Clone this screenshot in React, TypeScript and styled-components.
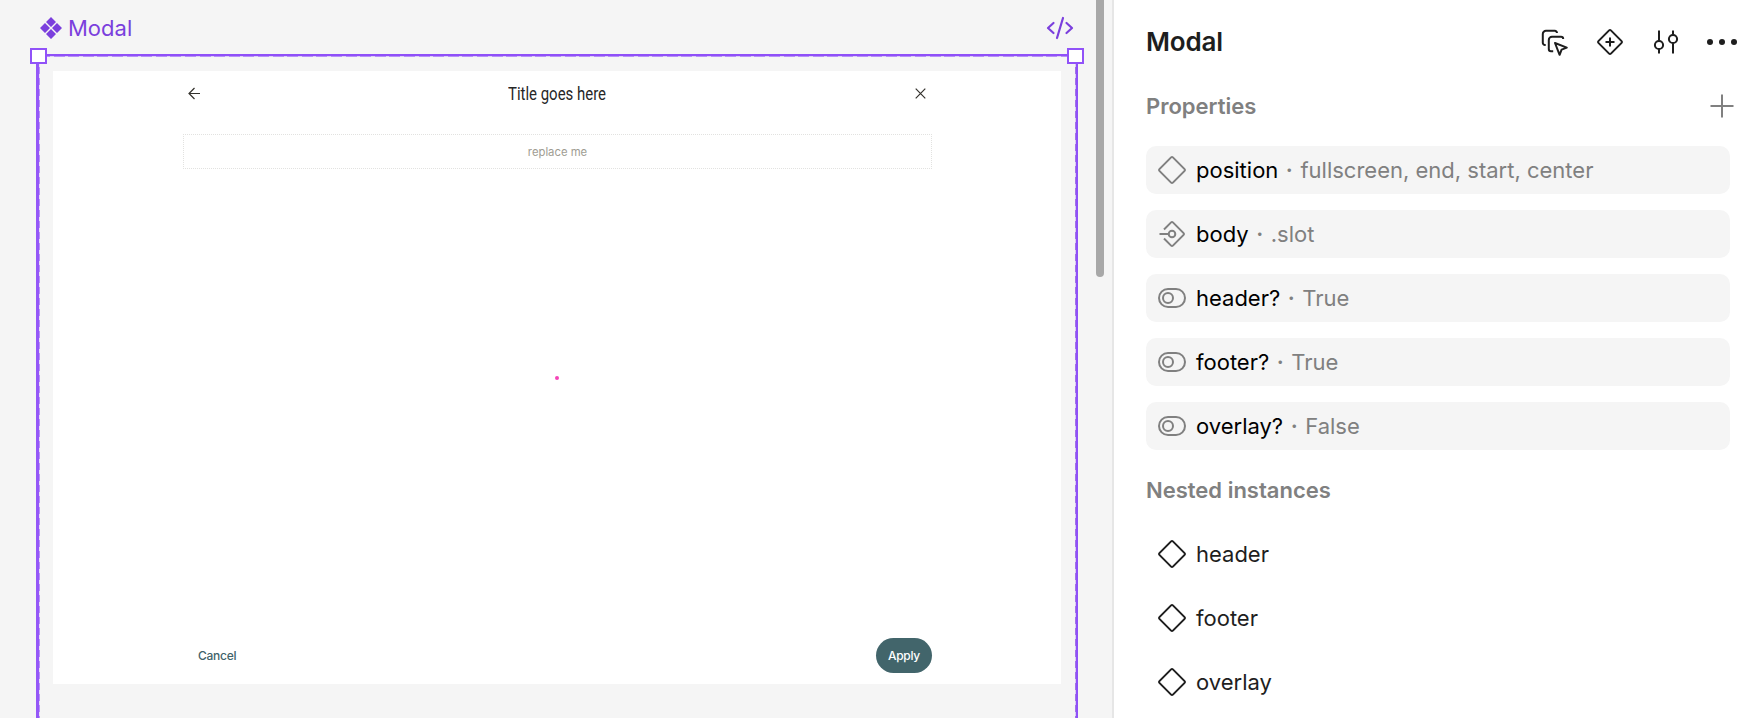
import React from 'react';
import styled, { createGlobalStyle } from 'styled-components';

const GlobalStyle = createGlobalStyle`
  *, *::before, *::after { box-sizing: border-box; }
  body { margin: 0; overflow: hidden; }
`;

const Screen = styled.div`
  display: flex;
  width: 1762px;
  height: 718px;
  overflow: hidden;
  background: #fff;
  font-family: Inter, 'Liberation Sans', sans-serif;
`;

const Canvas = styled.main`
  position: relative;
  flex: none;
  width: 1114px;
  height: 718px;
  padding: 0 34px 0 36px;
  background: #f5f5f5;
  border-right: 2px solid #e6e6e6;
`;

const CanvasBar = styled.div`
  display: flex;
  align-items: center;
  justify-content: space-between;
  height: 54px;
  padding: 2px 4px 0 4px;
  color: #7b3fdd;
`;

const FrameName = styled.div`
  display: flex;
  align-items: center;
  gap: 6px;
  font-size: 22px;
  font-weight: 420;
  line-height: 28px;
`;

const Frame = styled.section`
  position: relative;
  width: 1042px;
  height: 700px;
  padding: 15px 14px 0 14px;
  border: 2px solid #8f50f8;
  border-left: 3px solid #9457f8;

  &::before {
    content: '';
    position: absolute;
    inset: 0;
    background:
      repeating-linear-gradient(90deg, #b78ff9 0 11px, #ddd0f6 11px 14.6px) top / 100% 1px no-repeat,
      repeating-linear-gradient(180deg, #b78ff9 0 7.4px, #e6def6 7.4px 11px) left / 1px 100% no-repeat,
      repeating-linear-gradient(180deg, #a173e6 0 7.4px, #d8cbf0 7.4px 11px) right / 1px 100% no-repeat;
  }
`;

const Handle = styled.span<{ $side: 'left' | 'right' }>`
  position: absolute;
  top: -8px;
  ${(p) => (p.$side === 'left' ? 'left: -9px;' : 'right: -8px;')}
  width: 17px;
  height: 16px;
  background: #fff;
  border: 2px solid #9152f8;
`;

const ModalCard = styled.div`
  position: relative;
  display: flex;
  flex-direction: column;
  justify-content: space-between;
  width: 1008px;
  height: 613px;
  padding: 0 129px 11px 130px;
  background: #fff;
`;

const ModalHeader = styled.header`
  display: flex;
  align-items: center;
  justify-content: space-between;
  height: 45px;
  padding: 0 6px 0 5px;
  color: #33312c;
`;

const ModalTitle = styled.h1`
  margin: 0 2px 0 0;
  padding-top: 1px;
  font: 400 18px/24px Roboto, sans-serif;
  transform: scaleX(0.83);
  color: #262626;
`;

const Slot = styled.div`
  display: flex;
  align-items: center;
  justify-content: center;
  height: 35px;
  margin-top: 18px;
  border: 1px dotted #e2e2e0;
  font-size: 11.3px;
  color: #a09d93;
`;

const CenterMark = styled.span`
  position: absolute;
  top: 304.5px;
  left: 502px;
  width: 4px;
  height: 4px;
  border-radius: 2px;
  background: #f545b8;
`;

const ModalFooter = styled.footer`
  display: flex;
  align-items: center;
  justify-content: space-between;
  height: 35px;
`;

const ModalButton = styled.button<{ $primary?: boolean }>`
  height: 35px;
  border: 0;
  padding: 0 ${(p) => (p.$primary ? '12px' : '15px')};
  border-radius: 18px;
  background: ${(p) => (p.$primary ? '#42656b' : 'transparent')};
  color: ${(p) => (p.$primary ? '#fff' : '#3f636a')};
  font: 500 12px/35px Inter, sans-serif;
  letter-spacing: -0.25px;
`;

const Scrollbar = styled.span`
  position: absolute;
  top: -8px;
  right: 8px;
  width: 8px;
  height: 285px;
  border-radius: 4px;
  background: #a8a8a8;
`;

const Panel = styled.aside`
  display: flex;
  flex-direction: column;
  flex: 1;
  padding: 10px 32px 0 32px;
  color: #1e1e1e;
`;

const PanelHeader = styled.div`
  display: flex;
  align-items: center;
  justify-content: space-between;
  height: 64px;
  margin-right: -8px;
`;

const PanelTitle = styled.h2`
  margin: 0;
  font-size: 26px;
  line-height: 32px;
  font-weight: 600;
  letter-spacing: -0.2px;
`;

const Actions = styled.div`
  display: flex;
  align-items: center;
  gap: 24px;
`;

const SectionHeading = styled.div`
  display: flex;
  align-items: center;
  justify-content: space-between;
  height: 64px;
  margin-right: -8px;
  font-size: 22px;
  font-weight: 600;
  color: #808080;
`;

const PropertyList = styled.div`
  display: flex;
  flex-direction: column;
  gap: 16px;
  padding: 8px 0;
`;

const Row = styled.div<{ $filled?: boolean }>`
  display: flex;
  align-items: center;
  gap: 8px;
  height: 48px;
  padding: 0 10px;
  border-radius: 10px;
  background: ${(p) => (p.$filled ? '#f5f5f5' : 'transparent')};
  color: ${(p) => (p.$filled ? '#000' : '#1e1e1e')};
  font-size: 22px;
  line-height: 32px;
`;

const RowText = styled.span`
  white-space: pre;
`;

const Muted = styled.span`
  color: #808080;
`;

const Separator = styled(Muted)`
  margin: 0 2px;
  font-weight: 600;
`;

const Glyph = styled.svg<{ $weight?: number }>`
  display: block;
  flex: none;
  fill: none;
  stroke: currentColor;
  stroke-width: ${(p) => p.$weight ?? 2};
`;

const RowGlyph = styled(Glyph)<{ $muted?: boolean }>`
  width: 32px;
  height: 32px;
  color: ${(p) => (p.$muted ? '#808080' : '#1e1e1e')};
`;

const Diamond = ({ muted }: { muted?: boolean }) => (
  <RowGlyph viewBox="0 0 32 32" $muted={muted}>
    <path d="M15.1 3.4a1.3 1.3 0 0 1 1.8 0L28.6 15.1a1.3 1.3 0 0 1 0 1.8L16.9 28.6a1.3 1.3 0 0 1-1.8 0L3.4 16.9a1.3 1.3 0 0 1 0-1.8Z" />
  </RowGlyph>
);

const SwapGlyph = () => (
  <RowGlyph viewBox="0 0 32 32" $muted>
    <path d="M8 11.5 15.1 4.4a1.3 1.3 0 0 1 1.8 0L27.6 15.1a1.3 1.3 0 0 1 0 1.8L16.9 27.6a1.3 1.3 0 0 1-1.8 0L8 20.5M3.5 16H12" />
    <circle cx="16" cy="16" r="3.3" />
  </RowGlyph>
);

const ToggleGlyph = () => (
  <RowGlyph viewBox="0 0 32 32" $muted>
    <rect x="3" y="7" width="26" height="18" rx="9" />
    <circle cx="12" cy="16" r="5" />
  </RowGlyph>
);

type Property = { name: string; value: string; glyph: React.ReactNode };

const properties: Property[] = [
  { name: 'position', value: 'fullscreen, end, start, center', glyph: <Diamond muted /> },
  { name: 'body', value: '.slot', glyph: <SwapGlyph /> },
  { name: 'header?', value: 'True', glyph: <ToggleGlyph /> },
  { name: 'footer?', value: 'True', glyph: <ToggleGlyph /> },
  { name: 'overlay?', value: 'False', glyph: <ToggleGlyph /> },
];

const nested = ['header', 'footer', 'overlay'];

export default function App() {
  return (
    <Screen>
      <GlobalStyle />
      <Canvas>
        <CanvasBar>
          <FrameName>
            <Glyph width="22" height="22" viewBox="0 0 22 22">
              <path
                d="M11 0l5 5-5 5-5-5zM11 12l5 5-5 5-5-5zM5 6l5 5-5 5-5-5zM17 6l5 5-5 5-5-5z"
                fill="currentColor"
                stroke="none"
              />
            </Glyph>
            Modal
          </FrameName>
          <Glyph width="28" height="24" viewBox="0 0 28 24" $weight={2.2} strokeLinecap="round" strokeLinejoin="round">
            <path d="M7.5 7 2 12l5.5 5M20.500 7l5.5 5-5.5 5M17 2 11 22" />
          </Glyph>
        </CanvasBar>
        <Frame>
          <ModalCard>
            <div>
              <ModalHeader>
                <Glyph width="13" height="13" viewBox="0 0 13 13" $weight={1.2}>
                  <path d="M12 6.5H1M6.5 1 1 6.5 6.5 12" />
                </Glyph>
                <ModalTitle>Title goes here</ModalTitle>
                <Glyph width="11" height="11" viewBox="0 0 11 11" $weight={1.2}>
                  <path d="M.7.7 10.3 10.3M10.3.7.7 10.3" />
                </Glyph>
              </ModalHeader>
              <Slot>replace me</Slot>
            </div>
            <ModalFooter>
              <ModalButton>Cancel</ModalButton>
              <ModalButton $primary>Apply</ModalButton>
            </ModalFooter>
            <CenterMark />
          </ModalCard>
          <Handle $side="left" />
          <Handle $side="right" />
        </Frame>
        <Scrollbar />
      </Canvas>
      <Panel>
        <PanelHeader>
          <PanelTitle>Modal</PanelTitle>
          <Actions>
            <Glyph width="32" height="32" viewBox="0 0 32 32">
              <path d="M7.7 19H7a2.2 2.2 0 0 1-2.2-2.2V8A3.2 3.2 0 0 1 8 4.8h8.8A2.2 2.2 0 0 1 19 7M15.2 25.2H13a2.2 2.2 0 0 1-2.2-2.2v-9a3.2 3.2 0 0 1 3.2-3.2h9a2.2 2.2 0 0 1 2.2 2.2" />
              <path d="M17 17 28.8 21.6 23.6 23.6 21.6 28.8Z" strokeLinejoin="round" />
            </Glyph>
            <Glyph width="32" height="32" viewBox="0 0 32 32">
              <path d="M15.1 4.4a1.3 1.3 0 0 1 1.8 0L27.6 15.1a1.3 1.3 0 0 1 0 1.8L16.9 27.6a1.3 1.3 0 0 1-1.8 0L4.4 16.9a1.3 1.3 0 0 1 0-1.8ZM16 11.5v9M11.5 16h9" />
            </Glyph>
            <Glyph width="32" height="32" viewBox="0 0 32 32">
              <path d="M9 4.5v10.3M9 23v4.5M23 4.5v4.3M23 17.2v10.3" />
              <circle cx="9" cy="19" r="4.1" />
              <circle cx="23" cy="13" r="4.1" />
            </Glyph>
            <Glyph width="32" height="32" viewBox="0 0 32 32">
              <g fill="currentColor" stroke="none">
                <circle cx="4" cy="16" r="3" />
                <circle cx="16" cy="16" r="3" />
                <circle cx="28" cy="16" r="3" />
              </g>
            </Glyph>
          </Actions>
        </PanelHeader>
        <SectionHeading>
          Properties
          <Glyph width="32" height="32" viewBox="0 0 32 32">
            <path d="M16 4.5v23M4.5 16h23" />
          </Glyph>
        </SectionHeading>
        <PropertyList>
          {properties.map((p) => (
            <Row key={p.name} $filled>
              {p.glyph}
              <RowText>
                {p.name}
                <Separator> · </Separator>
                <Muted>{p.value}</Muted>
              </RowText>
            </Row>
          ))}
        </PropertyList>
        <SectionHeading>Nested instances</SectionHeading>
        <PropertyList>
          {nested.map((name) => (
            <Row key={name}>
              <Diamond />
              <RowText>{name}</RowText>
            </Row>
          ))}
        </PropertyList>
      </Panel>
    </Screen>
  );
}
